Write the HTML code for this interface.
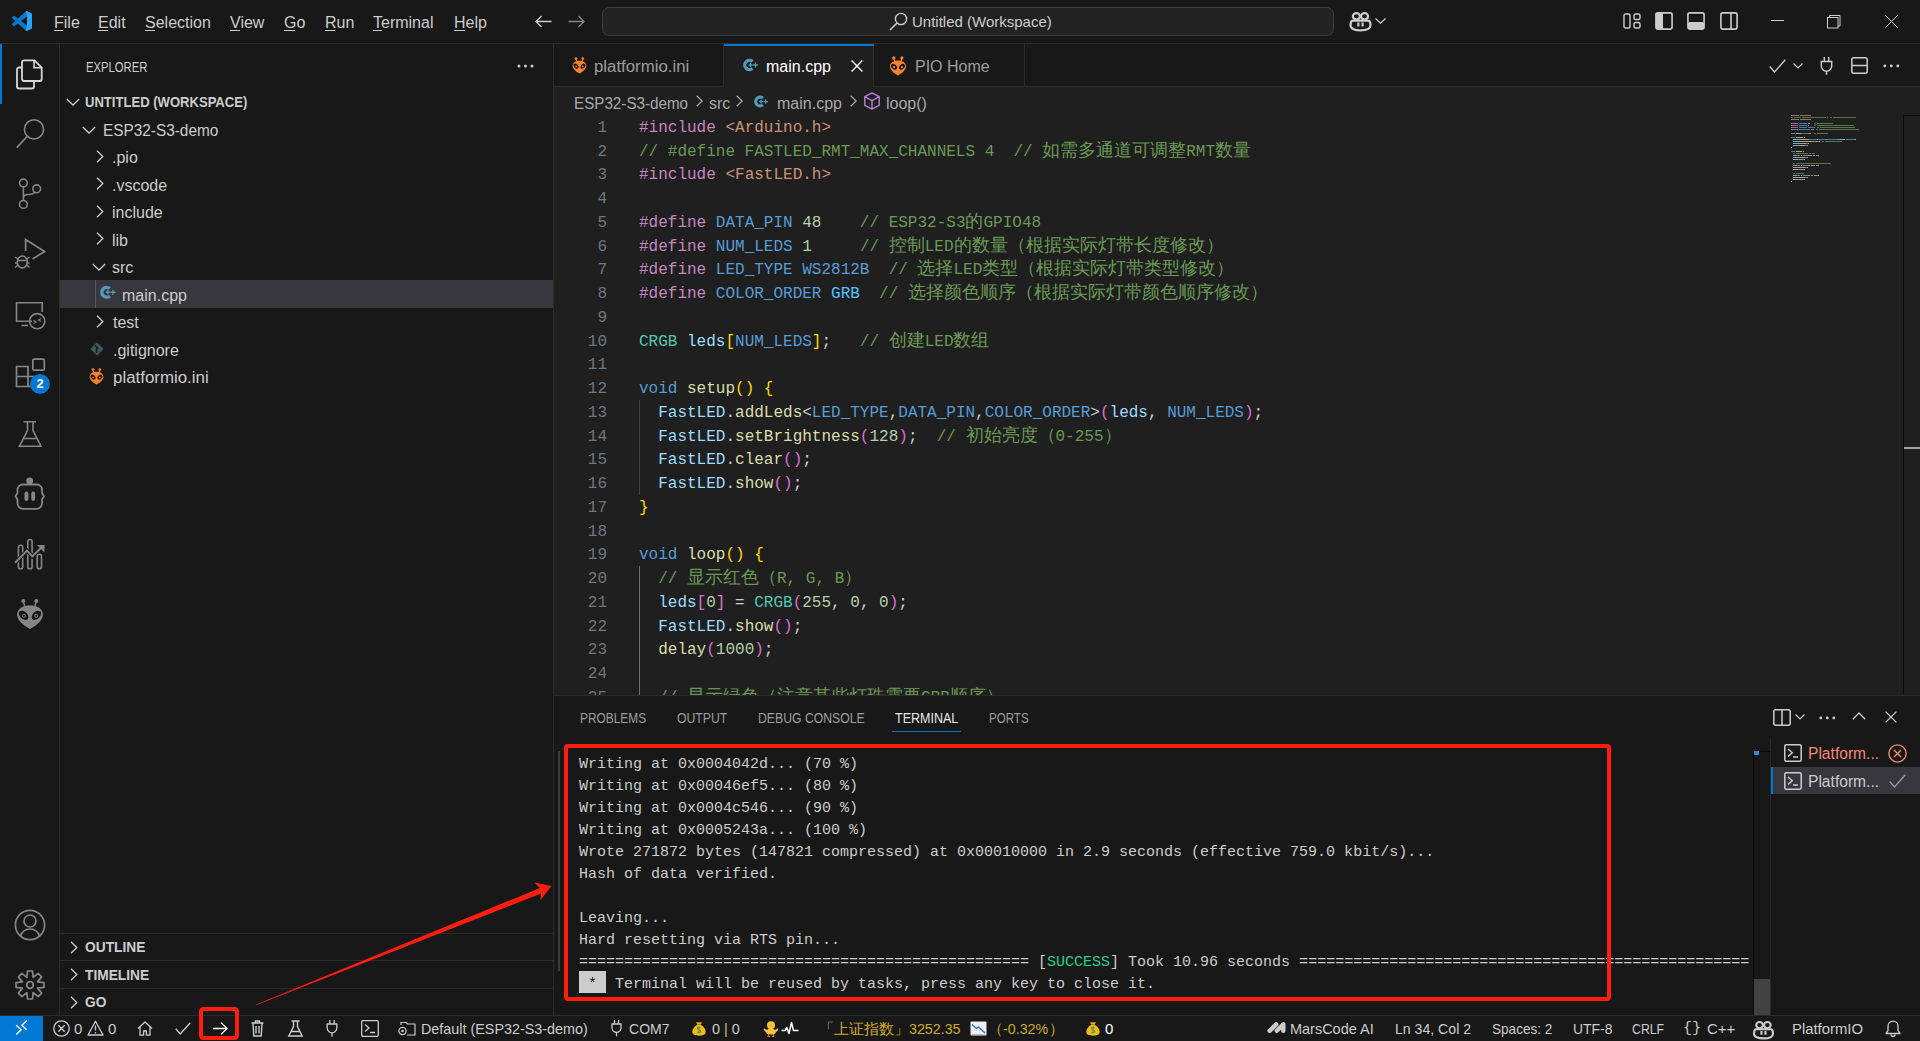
<!DOCTYPE html>
<domain hidden>Computer-Use</domain>
<html><head><meta charset="utf-8">
<style>
*{margin:0;padding:0;box-sizing:border-box}
html,body{width:1920px;height:1041px;overflow:hidden}
body{background:#181818;font-family:"Liberation Sans",sans-serif;position:relative;color:#ccc}
.a{position:absolute}
.t{position:absolute;white-space:pre}
.mono{font-family:"Liberation Mono",monospace}
svg{position:absolute;overflow:visible}
/* code colors */
.kw{color:#C586C0}.st{color:#CE9178}.cm{color:#6A9955}.mc{color:#569CD6}.nu{color:#B5CEA8}
.ty{color:#4EC9B0}.va{color:#9CDCFE}.fn{color:#DCDCAA}.b1{color:#FFD700}.b2{color:#DA70D6}.b3{color:#179FFF}.pl{color:#CCCCCC}
.ln{left:0;width:53px;text-align:right;font-size:16px;line-height:23.75px}
.cl{left:85px;font-size:16px;line-height:23.75px}
.cj{font-size:17.5px;line-height:0}
.en{color:#4FC1FF}
.tl{left:579px;font-size:15px;line-height:22px;color:#CCCCCC}
.sb{top:1016px;line-height:25px;font-size:15px}
.mm div{position:absolute;height:1.4px}
</style></head><body>

<!-- ============ TITLE BAR ============ -->
<div class="a" id="titlebar" style="left:0;top:0;width:1920px;height:43px;background:#181818">
<svg style="left:12px;top:11px" width="20" height="20" viewBox="0 0 100 100"><path fill="#0A78C8" d="M96.46 10.8L75.86.87a6.23 6.23 0 0 0-7.1 1.2L29.35 38.04 12.17 25.01a4.16 4.16 0 0 0-5.32.24L1.35 30.25a4.17 4.17 0 0 0 0 6.16L16.25 50 1.35 63.59a4.17 4.17 0 0 0 0 6.16l5.5 5a4.16 4.16 0 0 0 5.32.24l17.18-13.03 39.41 35.960a6.22 6.22 0 0 0 7.1 1.2l20.6-9.92A6.24 6.24 0 0 0 100 83.58V16.42a6.24 6.24 0 0 0-3.54-5.62zM75.02 72.7L45.11 50l29.91-22.7z"/><path fill="#2AA4F4" d="M68.76 2.07a6.23 6.23 0 0 1 7.1-1.2l20.6 9.93A6.24 6.24 0 0 1 100 16.42v67.16a6.24 6.24 0 0 1-3.54 5.62l-20.6 9.92a6.22 6.22 0 0 1-7.1-1.2L75.02 72.7V27.3z"/></svg>
<div class="t" style="left:54px;top:1px;line-height:43px;font-size:16px;color:#CCCCCC">File</div>
<div class="t" style="left:98px;top:1px;line-height:43px;font-size:16px;color:#CCCCCC">Edit</div>
<div class="t" style="left:145px;top:1px;line-height:43px;font-size:16px;color:#CCCCCC">Selection</div>
<div class="t" style="left:230px;top:1px;line-height:43px;font-size:16px;color:#CCCCCC">View</div>
<div class="t" style="left:284px;top:1px;line-height:43px;font-size:16px;color:#CCCCCC">Go</div>
<div class="t" style="left:325px;top:1px;line-height:43px;font-size:16px;color:#CCCCCC">Run</div>
<div class="t" style="left:373px;top:1px;line-height:43px;font-size:16px;color:#CCCCCC">Terminal</div>
<div class="t" style="left:454px;top:1px;line-height:43px;font-size:16px;color:#CCCCCC">Help</div>
<div class="a" style="left:54px;top:29.5px;width:9px;height:1px;background:#CCCCCC"></div>
<div class="a" style="left:98px;top:29.5px;width:10px;height:1px;background:#CCCCCC"></div>
<div class="a" style="left:145px;top:29.5px;width:10px;height:1px;background:#CCCCCC"></div>
<div class="a" style="left:230px;top:29.5px;width:10px;height:1px;background:#CCCCCC"></div>
<div class="a" style="left:284px;top:29.5px;width:11px;height:1px;background:#CCCCCC"></div>
<div class="a" style="left:325px;top:29.5px;width:10px;height:1px;background:#CCCCCC"></div>
<div class="a" style="left:373px;top:29.5px;width:9px;height:1px;background:#CCCCCC"></div>
<div class="a" style="left:454px;top:29.5px;width:11px;height:1px;background:#CCCCCC"></div>
<svg style="left:535px;top:15px" width="17" height="13" viewBox="0 0 17 13"><path d="M16.5 6.5H1M6.5 1L1 6.5L6.5 12" fill="none" stroke="#CCCCCC" stroke-width="1.3"/></svg>
<svg style="left:568px;top:15px" width="17" height="13" viewBox="0 0 17 13"><path d="M0.5 6.5H16M10.5 1L16 6.5L10.5 12" fill="none" stroke="#868686" stroke-width="1.3"/></svg>
<div class="a" style="left:602px;top:7px;width:732px;height:29px;background:#222222;border:1px solid #3E3E3E;border-radius:7px"></div>
<svg style="left:889px;top:12px" width="19" height="19" viewBox="0 0 19 19"><circle cx="12" cy="7" r="5.6" fill="none" stroke="#CCCCCC" stroke-width="1.4"/><path d="M8 11L1 18" stroke="#CCCCCC" stroke-width="1.6"/></svg>
<div class="t" style="left:912px;top:7px;line-height:29px;font-size:15px;color:#CCCCCC">Untitled (Workspace)</div>
<svg style="left:1349px;top:11px" width="23" height="20.6" viewBox="0 0 23 21.5"><ellipse cx="7.2" cy="5.6" rx="3.7" ry="3.4" fill="none" stroke="#CCCCCC" stroke-width="2.3"/><ellipse cx="15.7" cy="5.6" rx="3.7" ry="3.4" fill="none" stroke="#CCCCCC" stroke-width="2.3"/><path d="M2.8 10.2H20.2C21.5 11 21.9 13 21.9 15C21.9 18.7 17.5 20.2 11.5 20.2C5.5 20.2 1.1 18.7 1.1 15C1.1 13 1.5 11 2.8 10.2z" fill="none" stroke="#CCCCCC" stroke-width="2.3" stroke-linejoin="round"/><rect x="8.1" y="12" width="2.3" height="4.2" fill="#CCCCCC"/><rect x="12.5" y="12" width="2.3" height="4.2" fill="#CCCCCC"/></svg>
<svg style="left:1375px;top:18px" width="11" height="6" viewBox="0 0 11 6"><path d="M.5.5L5.5 5.2L10.5.5" fill="none" stroke="#CCCCCC" stroke-width="1.2"/></svg>
<svg style="left:1623px;top:13px" width="18" height="16" viewBox="0 0 18 16"><rect x="1" y="1" width="6" height="14" rx="1.6" fill="none" stroke="#CCCCCC" stroke-width="1.4"/><rect x="11" y="1" width="6" height="5.5" rx="1.6" fill="none" stroke="#CCCCCC" stroke-width="1.4"/><rect x="11" y="9.5" width="6" height="5.5" rx="1.6" fill="none" stroke="#CCCCCC" stroke-width="1.4"/></svg>
<svg style="left:1655px;top:12px" width="18" height="18" viewBox="0 0 18 18"><rect x=".9" y=".9" width="16.2" height="16.2" rx="2" fill="none" stroke="#CCCCCC" stroke-width="1.6"/><rect x="1" y="1" width="7" height="16" rx="1.5" fill="#CCCCCC"/></svg>
<svg style="left:1687px;top:12px" width="18" height="18" viewBox="0 0 18 18"><rect x=".9" y=".9" width="16.2" height="16.2" rx="2" fill="none" stroke="#CCCCCC" stroke-width="1.6"/><rect x="1" y="10" width="16" height="7" rx="1.5" fill="#CCCCCC"/></svg>
<svg style="left:1720px;top:12px" width="18" height="18" viewBox="0 0 18 18"><rect x=".9" y=".9" width="16.2" height="16.2" rx="2" fill="none" stroke="#CCCCCC" stroke-width="1.6"/><path d="M11 1v16" stroke="#CCCCCC" stroke-width="1.6"/></svg>
<div class="a" style="left:1771px;top:20px;width:13px;height:1px;background:#CCCCCC"></div>
<svg style="left:1827px;top:15px" width="14" height="14" viewBox="0 0 14 14"><rect x=".5" y="2.5" width="10.5" height="10.5" fill="none" stroke="#CCCCCC" stroke-width="1"/><path d="M2.5 2.5V.5H13V11h-2" fill="none" stroke="#CCCCCC" stroke-width="1"/></svg>
<svg style="left:1885px;top:15px" width="13" height="13" viewBox="0 0 13 13"><path d="M.3.3L12.7 12.7M12.7.3L.3 12.7" stroke="#CCCCCC" stroke-width="1"/></svg>
</div>
<div class="a" style="left:0;top:43px;width:1920px;height:1px;background:#2B2B2B"></div>

<!-- ============ ACTIVITY BAR ============ -->
<div class="a" style="left:59px;top:44px;width:1px;height:971px;background:#2B2B2B"></div>
<div class="a" style="left:0;top:44px;width:2px;height:60px;background:#0078D4"></div>
<!-- explorer -->
<svg style="left:16px;top:59px" width="28" height="31" viewBox="0 0 28 31"><path d="M8 1.3h10.5l7.2 7.2V20a2 2 0 0 1-2 2H8a2 2 0 0 1-2-2V3.3a2 2 0 0 1 2-2z" fill="none" stroke="#D7D7D7" stroke-width="1.8"/><path d="M18 1.5v7.3h7.5" fill="none" stroke="#D7D7D7" stroke-width="1.6"/><path d="M6 8.5H3a2 2 0 0 0-2 2V27.5a2 2 0 0 0 2 2h13a2 2 0 0 0 2-2v-5.5" fill="none" stroke="#D7D7D7" stroke-width="1.8"/></svg>
<!-- search -->
<svg style="left:15px;top:118px" width="32" height="32" viewBox="0 0 32 32"><circle cx="19" cy="11.4" r="9.6" fill="none" stroke="#868686" stroke-width="1.6"/><path d="M12 18.5L1.8 29.6" stroke="#868686" stroke-width="1.8"/></svg>
<!-- scm -->
<svg style="left:16px;top:176px" width="28" height="34" viewBox="0 0 28 34"><circle cx="7.4" cy="7" r="3.9" fill="none" stroke="#868686" stroke-width="1.6"/><circle cx="7.4" cy="28.4" r="3.9" fill="none" stroke="#868686" stroke-width="1.6"/><circle cx="20.7" cy="12.8" r="3.9" fill="none" stroke="#868686" stroke-width="1.6"/><path d="M7.4 10.9V24.5M7.4 22c0-2.5 1.5-3.5 5-3.5c4 0 6-1.5 7-2.5" fill="none" stroke="#868686" stroke-width="1.6"/></svg>
<!-- run debug -->
<svg style="left:14px;top:238px" width="34" height="32" viewBox="0 0 34 32"><path d="M11.6 13V1.6L30.6 13.5L18.5 21" fill="none" stroke="#868686" stroke-width="1.7"/><ellipse cx="8.3" cy="24" rx="5" ry="6" fill="none" stroke="#868686" stroke-width="1.6"/><path d="M3.3 22.5h10M1 19l3 2M15.6 19l-3 2M1 29.5l3-2.5M15.6 29.5l-3-2.5M4 25H1M12.5 25h3" stroke="#868686" stroke-width="1.4"/></svg>
<!-- remote -->
<svg style="left:15px;top:301px" width="33" height="30" viewBox="0 0 33 30"><path d="M17 20.3H1.5V1.7H27.2V11" fill="none" stroke="#868686" stroke-width="1.6"/><path d="M6.5 24.5h6.5" stroke="#868686" stroke-width="1.6"/><circle cx="22.2" cy="20.2" r="7.6" fill="none" stroke="#868686" stroke-width="1.6"/><path d="M18.5 19.5l2.5 1.5-2.5 1.5M26 17.5l-2.5 1.5 2.5 1.5" fill="none" stroke="#868686" stroke-width="1.1"/></svg>
<!-- extensions -->
<svg style="left:15px;top:358px" width="32" height="31" viewBox="0 0 32 31"><path d="M1.5 8.5h11.5v20H1.5zM1.5 18.5h21v10H13" fill="none" stroke="#868686" stroke-width="1.7"/><rect x="17.8" y="1.2" width="11.5" height="11" rx="1.5" fill="none" stroke="#868686" stroke-width="1.7"/></svg>
<div class="a" style="left:30px;top:374px;width:20px;height:20px;border-radius:10px;background:#0078D4;color:#fff;font-size:13px;font-weight:bold;text-align:center;line-height:20px">2</div>
<!-- testing -->
<svg style="left:18px;top:420px" width="25" height="28" viewBox="0 0 25 28"><path d="M5.5 1.8h12.5M9.5 1.8v8.8L1.5 26.2h21.5L15 10.6V1.8M5 18.5h14.5" fill="none" stroke="#868686" stroke-width="1.6"/></svg>
<!-- robot -->
<svg style="left:14px;top:476px" width="32" height="35" viewBox="0 0 32 35"><circle cx="15.7" cy="5" r="3.4" fill="#868686"/><path d="M9 8.5h13.5c3.5 0 5.5 2.5 5.5 5.5v3l2 3.3-2 3.3v3.5c0 3-2 5.7-5.5 5.7H9c-3.5 0-5.5-2.7-5.5-5.7v-3.5L1.5 20.3l2-3.3v-3c0-3 2-5.5 5.5-5.5z" fill="none" stroke="#868686" stroke-width="1.8"/><rect x="10.5" y="15.5" width="3.8" height="9.5" rx="1.9" fill="#868686"/><rect x="17.3" y="15.5" width="3.8" height="9.5" rx="1.9" fill="#868686"/></svg>
<!-- chart -->
<svg style="left:14px;top:538px" width="32" height="32" viewBox="0 0 32 32"><rect x="4.4" y="7.3" width="4.3" height="23.5" rx="2.1" fill="none" stroke="#868686" stroke-width="1.6"/><rect x="13.8" y="1.5" width="4.3" height="29.3" rx="2.1" fill="none" stroke="#868686" stroke-width="1.6"/><rect x="23.2" y="16.3" width="4.3" height="14.5" rx="2.1" fill="none" stroke="#868686" stroke-width="1.6"/><path d="M1 24.8L13 12.6L18.3 18.4L29 8" fill="none" stroke="#181818" stroke-width="4"/><path d="M1 24.8L13 12.6L18.3 18.4L29 8" fill="none" stroke="#868686" stroke-width="2"/><path d="M23 7h7.5v7.5z" fill="#868686"/></svg>
<!-- platformio -->
<svg style="left:16px;top:598px" width="28" height="32" viewBox="0 0 28 32"><circle cx="7.3" cy="3" r="2" fill="#868686"/><circle cx="20.3" cy="3" r="2" fill="#868686"/><path d="M7.6 4.5L8.8 8.5M20 4.5L18.8 8.5" stroke="#868686" stroke-width="1.3"/><path d="M14 7.2c7.2 0 12.9 3.6 12.9 9.6 0 4.6-6 11-12.9 14.2C7.1 27.8 1.1 21.4 1.1 16.8c0-6 5.7-9.6 12.9-9.6z" fill="#868686"/><ellipse cx="7.6" cy="17.3" rx="5.6" ry="3.6" transform="rotate(42 7.6 17.3)" fill="#181818"/><ellipse cx="20.4" cy="17.3" rx="5.6" ry="3.6" transform="rotate(-42 20.4 17.3)" fill="#181818"/><circle cx="7.8" cy="17.8" r="1.5" fill="none" stroke="#868686" stroke-width="1"/><circle cx="20.2" cy="17.8" r="1.5" fill="none" stroke="#868686" stroke-width="1"/></svg>
<!-- accounts -->
<svg style="left:14px;top:909px" width="32" height="32" viewBox="0 0 32 32"><circle cx="16" cy="16" r="14.6" fill="none" stroke="#868686" stroke-width="1.7"/><circle cx="16" cy="12" r="6" fill="none" stroke="#868686" stroke-width="1.7"/><path d="M6.5 27c1.5-4.5 5-7 9.5-7s8 2.5 9.5 7" fill="none" stroke="#868686" stroke-width="1.7"/></svg>
<!-- settings -->
<svg style="left:14px;top:969px" width="32" height="32" viewBox="0 0 32 32"><path d="M13.53 2.02L18.47 2.02L19.14 8.42L24.14 4.37L27.63 7.86L23.58 12.86L29.98 13.53L29.98 18.47L23.58 19.14L27.63 24.14L24.14 27.63L19.14 23.58L18.47 29.98L13.53 29.98L12.86 23.58L7.86 27.63L4.37 24.14L8.42 19.14L2.02 18.47L2.02 13.53L8.42 12.86L4.37 7.86L7.86 4.37L12.86 8.42z" fill="none" stroke="#868686" stroke-width="1.7" stroke-linejoin="round"/><circle cx="16" cy="16" r="3.3" fill="none" stroke="#868686" stroke-width="1.8"/></svg>

<!-- ============ SIDEBAR ============ -->
<div class="a" style="left:553px;top:44px;width:1px;height:971px;background:#2B2B2B"></div>
<div class="t" style="left:86px;top:45.5px;line-height:43.75px;font-size:13.75px;color:#CCCCCC;display:inline-block;transform:scaleX(.82);transform-origin:0 0">EXPLORER</div>
<svg style="left:517px;top:64px" width="17" height="4" viewBox="0 0 17 4"><circle cx="2" cy="2" r="1.5" fill="#CCCCCC"/><circle cx="8.5" cy="2" r="1.5" fill="#CCCCCC"/><circle cx="15" cy="2" r="1.5" fill="#CCCCCC"/></svg>
<svg style="left:66px;top:98px" width="14" height="8" viewBox="0 0 14 8"><path d="M.8 1L7 7L13.2 1" fill="none" stroke="#CCCCCC" stroke-width="1.3"/></svg>
<div class="t" style="left:85px;top:88.5px;line-height:27.5px;font-size:13.75px;font-weight:bold;color:#CCCCCC;display:inline-block;transform:scaleX(.95);transform-origin:0 0">UNTITLED (WORKSPACE)</div>
<svg style="left:82px;top:126px" width="14" height="8" viewBox="0 0 14 8"><path d="M.8 1L7 7L13.2 1" fill="none" stroke="#CCCCCC" stroke-width="1.3"/></svg>
<div class="t" style="left:103px;top:116.5px;line-height:27.5px;font-size:16px;color:#CCCCCC;transform:scaleX(.96);transform-origin:0 0">ESP32-S3-demo</div>
<svg style="left:96px;top:150px" width="8" height="13" viewBox="0 0 8 13"><path d="M1 .8L6.8 6.5L1 12.2" fill="none" stroke="#CCCCCC" stroke-width="1.3"/></svg><div class="t" style="left:112px;top:144.0px;line-height:27.5px;font-size:16px;color:#CCCCCC">.pio</div>
<svg style="left:96px;top:177px" width="8" height="13" viewBox="0 0 8 13"><path d="M1 .8L6.8 6.5L1 12.2" fill="none" stroke="#CCCCCC" stroke-width="1.3"/></svg><div class="t" style="left:112px;top:171.5px;line-height:27.5px;font-size:16px;color:#CCCCCC">.vscode</div>
<svg style="left:96px;top:205px" width="8" height="13" viewBox="0 0 8 13"><path d="M1 .8L6.8 6.5L1 12.2" fill="none" stroke="#CCCCCC" stroke-width="1.3"/></svg><div class="t" style="left:112px;top:199.0px;line-height:27.5px;font-size:16px;color:#CCCCCC">include</div>
<svg style="left:96px;top:232px" width="8" height="13" viewBox="0 0 8 13"><path d="M1 .8L6.8 6.5L1 12.2" fill="none" stroke="#CCCCCC" stroke-width="1.3"/></svg><div class="t" style="left:112px;top:226.5px;line-height:27.5px;font-size:16px;color:#CCCCCC">lib</div>
<svg style="left:92px;top:263px" width="14" height="8" viewBox="0 0 14 8"><path d="M.8 1L7 7L13.2 1" fill="none" stroke="#CCCCCC" stroke-width="1.3"/></svg><div class="t" style="left:112px;top:254.0px;line-height:27.5px;font-size:16px;color:#CCCCCC">src</div>
<div class="a" style="left:60px;top:280px;width:493px;height:28px;background:#37373D"></div>
<div class="a" style="left:95px;top:280px;width:1px;height:28px;background:#585858"></div>
<svg style="left:100px;top:285px" width="15.5" height="14.47" viewBox="0 0 15 14"><path d="M9.5 3.4A4.7 4.7 0 1 0 9.5 10.6" fill="none" stroke="#519ABA" stroke-width="3.3"/><path d="M5.6 7h4M7.6 5v4M10 7h5M12.5 4.5v5" stroke="#519ABA" stroke-width="1.3"/></svg>
<div class="t" style="left:122px;top:281.5px;line-height:27.5px;font-size:16px;color:#CCCCCC">main.cpp</div>
<svg style="left:96px;top:315px" width="8" height="13" viewBox="0 0 8 13"><path d="M1 .8L6.8 6.5L1 12.2" fill="none" stroke="#CCCCCC" stroke-width="1.3"/></svg><div class="t" style="left:113px;top:309.0px;line-height:27.5px;font-size:16px;color:#CCCCCC">test</div>
<svg style="left:90px;top:342px" width="14" height="14" viewBox="0 0 14 14"><path d="M7 .3L13.7 7L7 13.7L.3 7z" fill="#41535B"/><path d="M5 3.5l3.5 3.5M6.5 5v5" stroke="#181818" stroke-width="1.2"/><circle cx="6.5" cy="10" r="1" fill="#181818"/></svg>
<div class="t" style="left:113px;top:336.5px;line-height:27.5px;font-size:16px;color:#CCCCCC">.gitignore</div>
<svg style="left:89px;top:368px" width="15" height="17" viewBox="0 0 28 32"><circle cx="7.3" cy="3" r="2.6" fill="#F6822B"/><circle cx="20.3" cy="3" r="2.6" fill="#F6822B"/><path d="M7.6 4.5L8.8 8.5M20 4.5L18.8 8.5" stroke="#F6822B" stroke-width="2"/><path d="M14 7.2c7.2 0 12.9 3.6 12.9 9.6 0 4.6-6 11-12.9 14.2C7.1 27.8 1.1 21.4 1.1 16.8c0-6 5.7-9.6 12.9-9.6z" fill="#F6822B"/><ellipse cx="7.6" cy="17.3" rx="5.4" ry="3.8" transform="rotate(42 7.6 17.3)" fill="#181818"/><ellipse cx="20.4" cy="17.3" rx="5.4" ry="3.8" transform="rotate(-42 20.4 17.3)" fill="#181818"/><circle cx="7.8" cy="17.8" r="1.7" fill="#F6822B"/><circle cx="20.2" cy="17.8" r="1.7" fill="#F6822B"/></svg>
<div class="t" style="left:113px;top:364.0px;line-height:27.5px;font-size:16px;color:#CCCCCC;transform:scaleX(1.055);transform-origin:0 0">platformio.ini</div>
<!-- bottom sections -->
<div class="a" style="left:60px;top:933px;width:493px;height:1px;background:#2B2B2B"></div>
<div class="a" style="left:60px;top:960px;width:493px;height:1px;background:#2B2B2B"></div>
<div class="a" style="left:60px;top:988px;width:493px;height:1px;background:#2B2B2B"></div>
<svg style="left:70px;top:941px" width="8" height="13" viewBox="0 0 8 13"><path d="M1 .8L6.8 6.5L1 12.2" fill="none" stroke="#CCCCCC" stroke-width="1.3"/></svg><svg style="left:70px;top:968px" width="8" height="13" viewBox="0 0 8 13"><path d="M1 .8L6.8 6.5L1 12.2" fill="none" stroke="#CCCCCC" stroke-width="1.3"/></svg><svg style="left:70px;top:996px" width="8" height="13" viewBox="0 0 8 13"><path d="M1 .8L6.8 6.5L1 12.2" fill="none" stroke="#CCCCCC" stroke-width="1.3"/></svg>
<div class="t" style="left:85px;top:935px;line-height:26.5px;font-size:13.75px;font-weight:bold;color:#CCCCCC">OUTLINE</div>
<div class="t" style="left:85px;top:962px;line-height:27px;font-size:13.75px;font-weight:bold;color:#CCCCCC">TIMELINE</div>
<div class="t" style="left:85px;top:990px;line-height:25px;font-size:13.75px;font-weight:bold;color:#CCCCCC">GO</div>

<!-- ============ EDITOR ============ -->
<div class="a" id="editor" style="left:554px;top:87px;width:1366px;height:608px;background:#1F1F1F"></div>
<div class="a" style="left:554px;top:86px;width:1366px;height:1px;background:#2B2B2B"></div>
<!-- tabs -->
<div class="a" style="left:554px;top:44px;width:170px;height:42px;background:#181818;border-right:1px solid #2B2B2B"></div>
<svg style="left:572px;top:57px" width="15" height="17" viewBox="0 0 28 32"><circle cx="7.3" cy="3" r="2.6" fill="#F6822B"/><circle cx="20.3" cy="3" r="2.6" fill="#F6822B"/><path d="M7.6 4.5L8.8 8.5M20 4.5L18.8 8.5" stroke="#F6822B" stroke-width="2"/><path d="M14 7.2c7.2 0 12.9 3.6 12.9 9.6 0 4.6-6 11-12.9 14.2C7.1 27.8 1.1 21.4 1.1 16.8c0-6 5.7-9.6 12.9-9.6z" fill="#F6822B"/><ellipse cx="7.6" cy="17.3" rx="5.4" ry="3.8" transform="rotate(42 7.6 17.3)" fill="#181818"/><ellipse cx="20.4" cy="17.3" rx="5.4" ry="3.8" transform="rotate(-42 20.4 17.3)" fill="#181818"/><circle cx="7.8" cy="17.8" r="1.7" fill="#F6822B"/><circle cx="20.2" cy="17.8" r="1.7" fill="#F6822B"/></svg>
<div class="t" style="left:594px;top:46px;line-height:42px;font-size:16px;color:#9D9D9D;transform:scaleX(1.05);transform-origin:0 0">platformio.ini</div>
<div class="a" style="left:724px;top:44px;width:150px;height:43px;background:#1F1F1F;border-right:1px solid #2B2B2B"></div>
<div class="a" style="left:724px;top:44px;width:150px;height:1.5px;background:#0078D4"></div>
<svg style="left:743px;top:57.5px" width="15" height="14.00" viewBox="0 0 15 14"><path d="M9.5 3.4A4.7 4.7 0 1 0 9.5 10.6" fill="none" stroke="#519ABA" stroke-width="3.3"/><path d="M5.6 7h4M7.6 5v4M10 7h5M12.5 4.5v5" stroke="#519ABA" stroke-width="1.3"/></svg>
<div class="t" style="left:766px;top:46px;line-height:42px;font-size:16px;color:#FFFFFF">main.cpp</div>
<svg style="left:851px;top:60px" width="12" height="12" viewBox="0 0 12 12"><path d="M.6.6L11.4 11.4M11.4.6L.6 11.4" stroke="#FFFFFF" stroke-width="1.4"/></svg>
<div class="a" style="left:874px;top:44px;width:151px;height:42px;background:#181818;border-right:1px solid #2B2B2B"></div>
<svg style="left:888.5px;top:56px" width="18" height="20" viewBox="0 0 28 32"><circle cx="7.3" cy="3" r="2.6" fill="#F6822B"/><circle cx="20.3" cy="3" r="2.6" fill="#F6822B"/><path d="M7.6 4.5L8.8 8.5M20 4.5L18.8 8.5" stroke="#F6822B" stroke-width="2"/><path d="M14 7.2c7.2 0 12.9 3.6 12.9 9.6 0 4.6-6 11-12.9 14.2C7.1 27.8 1.1 21.4 1.1 16.8c0-6 5.7-9.6 12.9-9.6z" fill="#F6822B"/><ellipse cx="7.6" cy="17.3" rx="5.4" ry="3.8" transform="rotate(42 7.6 17.3)" fill="#181818"/><ellipse cx="20.4" cy="17.3" rx="5.4" ry="3.8" transform="rotate(-42 20.4 17.3)" fill="#181818"/><circle cx="7.8" cy="17.8" r="1.7" fill="#F6822B"/><circle cx="20.2" cy="17.8" r="1.7" fill="#F6822B"/></svg>
<div class="t" style="left:915px;top:46px;line-height:42px;font-size:16px;color:#9D9D9D">PIO Home</div>
<svg style="left:1769px;top:59px" width="17" height="14" viewBox="0 0 17 14"><path d="M.7 7.5L5.5 13L16.3.8" fill="none" stroke="#CCCCCC" stroke-width="1.4"/></svg>
<svg style="left:1793px;top:63px" width="10" height="6" viewBox="0 0 10 6"><path d="M.5.5L5 5L9.5.5" fill="none" stroke="#CCCCCC" stroke-width="1.2"/></svg>
<svg style="left:1820px;top:56px" width="13" height="19" viewBox="0 0 13 19"><path d="M4.3 1v4.5M8.7 1v4.5M1.3 5.5h10.4v4.5a5.2 5.2 0 0 1-10.4 0z" fill="none" stroke="#CCCCCC" stroke-width="1.4"/><path d="M6.5 15.3v3.5" stroke="#CCCCCC" stroke-width="1.4"/></svg>
<svg style="left:1851px;top:57px" width="17" height="17" viewBox="0 0 17 17"><rect x=".8" y=".8" width="15.4" height="15.4" rx="2" fill="none" stroke="#CCCCCC" stroke-width="1.5"/><path d="M1 8.5h15" stroke="#CCCCCC" stroke-width="1.5"/></svg>
<svg style="left:1883px;top:64px" width="17" height="4" viewBox="0 0 17 4"><circle cx="1.8" cy="2" r="1.4" fill="#CCCCCC"/><circle cx="8.3" cy="2" r="1.4" fill="#CCCCCC"/><circle cx="14.8" cy="2" r="1.4" fill="#CCCCCC"/></svg>
<!-- breadcrumbs -->
<div class="t" style="left:574px;top:89.5px;line-height:27.5px;font-size:16px;color:#A9A9A9;transform:scaleX(.95);transform-origin:0 0">ESP32-S3-demo</div>
<svg style="left:696px;top:95px" width="7" height="12" viewBox="0 0 7 12"><path d="M.7.7L6.2 6L.7 11.3" fill="none" stroke="#A9A9A9" stroke-width="1.2"/></svg>
<div class="t" style="left:709px;top:89.5px;line-height:27.5px;font-size:16px;color:#A9A9A9">src</div>
<svg style="left:736px;top:95px" width="7" height="12" viewBox="0 0 7 12"><path d="M.7.7L6.2 6L.7 11.3" fill="none" stroke="#A9A9A9" stroke-width="1.2"/></svg>
<svg style="left:754px;top:94.5px" width="14" height="13.07" viewBox="0 0 15 14"><path d="M9.5 3.4A4.7 4.7 0 1 0 9.5 10.6" fill="none" stroke="#519ABA" stroke-width="3.3"/><path d="M5.6 7h4M7.6 5v4M10 7h5M12.5 4.5v5" stroke="#519ABA" stroke-width="1.3"/></svg>
<div class="t" style="left:777px;top:89.5px;line-height:27.5px;font-size:16px;color:#A9A9A9">main.cpp</div>
<svg style="left:850px;top:95px" width="7" height="12" viewBox="0 0 7 12"><path d="M.7.7L6.2 6L.7 11.3" fill="none" stroke="#A9A9A9" stroke-width="1.2"/></svg>
<svg style="left:864px;top:92px" width="16" height="18" viewBox="0 0 16 18"><path d="M8 .8L15.2 4.7V13.3L8 17.2L.8 13.3V4.7z M.8 4.7L8 8.6L15.2 4.7M8 8.6V17.2" fill="none" stroke="#B180D7" stroke-width="1.4" stroke-linejoin="round"/></svg>
<div class="t" style="left:886px;top:89.5px;line-height:27.5px;font-size:16px;color:#A9A9A9">loop()</div>

<!-- code -->
<div class="a" style="left:554px;top:114.5px;width:1230px;height:580.5px;overflow:hidden">
<div class="a" style="left:85px;top:285px;width:1px;height:95px;background:#404040"></div>
<div class="a" style="left:85px;top:451.25px;width:1px;height:140px;background:#707070"></div>
<div class="t mono ln" style="top:2.40px;color:#6E7681">1</div>
<div class="t mono cl" style="top:2.40px"><span class="kw">#include</span><span class="pl"> </span><span class="st">&lt;Arduino.h&gt;</span></div>
<div class="t mono ln" style="top:26.15px;color:#6E7681">2</div>
<div class="t mono cl" style="top:26.15px"><span class="cm">// #define FASTLED_RMT_MAX_CHANNELS 4  // <span class="cj">如需多通道可调整</span>RMT<span class="cj">数量</span></span></div>
<div class="t mono ln" style="top:49.90px;color:#6E7681">3</div>
<div class="t mono cl" style="top:49.90px"><span class="kw">#include</span><span class="pl"> </span><span class="st">&lt;FastLED.h&gt;</span></div>
<div class="t mono ln" style="top:73.65px;color:#6E7681">4</div>
<div class="t mono ln" style="top:97.40px;color:#6E7681">5</div>
<div class="t mono cl" style="top:97.40px"><span class="kw">#define</span><span class="pl"> </span><span class="mc">DATA_PIN</span><span class="pl"> </span><span class="nu">48</span><span class="pl">    </span><span class="cm">// ESP32-S3<span class="cj">的</span>GPIO48</span></div>
<div class="t mono ln" style="top:121.15px;color:#6E7681">6</div>
<div class="t mono cl" style="top:121.15px"><span class="kw">#define</span><span class="pl"> </span><span class="mc">NUM_LEDS</span><span class="pl"> </span><span class="nu">1</span><span class="pl">     </span><span class="cm">// <span class="cj">控制</span>LED<span class="cj">的数量（根据实际灯带长度修改）</span></span></div>
<div class="t mono ln" style="top:144.90px;color:#6E7681">7</div>
<div class="t mono cl" style="top:144.90px"><span class="kw">#define</span><span class="pl"> </span><span class="mc">LED_TYPE</span><span class="pl"> </span><span class="mc">WS2812B</span><span class="pl">  </span><span class="cm">// <span class="cj">选择</span>LED<span class="cj">类型（根据实际灯带类型修改）</span></span></div>
<div class="t mono ln" style="top:168.65px;color:#6E7681">8</div>
<div class="t mono cl" style="top:168.65px"><span class="kw">#define</span><span class="pl"> </span><span class="mc">COLOR_ORDER</span><span class="pl"> </span><span class="en">GRB</span><span class="pl">  </span><span class="cm">// <span class="cj">选择颜色顺序（根据实际灯带颜色顺序修改）</span></span></div>
<div class="t mono ln" style="top:192.40px;color:#6E7681">9</div>
<div class="t mono ln" style="top:216.15px;color:#6E7681">10</div>
<div class="t mono cl" style="top:216.15px"><span class="ty">CRGB</span><span class="pl"> </span><span class="va">leds</span><span class="b1">[</span><span class="mc">NUM_LEDS</span><span class="b1">]</span><span class="pl">;   </span><span class="cm">// <span class="cj">创建</span>LED<span class="cj">数组</span></span></div>
<div class="t mono ln" style="top:239.90px;color:#6E7681">11</div>
<div class="t mono ln" style="top:263.65px;color:#6E7681">12</div>
<div class="t mono cl" style="top:263.65px"><span class="mc">void</span><span class="pl"> </span><span class="fn">setup</span><span class="b1">()</span><span class="pl"> </span><span class="b1">{</span></div>
<div class="t mono ln" style="top:287.40px;color:#6E7681">13</div>
<div class="t mono cl" style="top:287.40px"><span class="pl">  </span><span class="va">FastLED</span><span class="pl">.</span><span class="fn">addLeds</span><span class="pl">&lt;</span><span class="mc">LED_TYPE</span><span class="pl">,</span><span class="mc">DATA_PIN</span><span class="pl">,</span><span class="mc">COLOR_ORDER</span><span class="pl">&gt;</span><span class="b2">(</span><span class="va">leds</span><span class="pl">, </span><span class="mc">NUM_LEDS</span><span class="b2">)</span><span class="pl">;</span></div>
<div class="t mono ln" style="top:311.15px;color:#6E7681">14</div>
<div class="t mono cl" style="top:311.15px"><span class="pl">  </span><span class="va">FastLED</span><span class="pl">.</span><span class="fn">setBrightness</span><span class="b2">(</span><span class="nu">128</span><span class="b2">)</span><span class="pl">;  </span><span class="cm">// <span class="cj">初始亮度（</span>0-255<span class="cj">）</span></span></div>
<div class="t mono ln" style="top:334.90px;color:#6E7681">15</div>
<div class="t mono cl" style="top:334.90px"><span class="pl">  </span><span class="va">FastLED</span><span class="pl">.</span><span class="fn">clear</span><span class="b2">()</span><span class="pl">;</span></div>
<div class="t mono ln" style="top:358.65px;color:#6E7681">16</div>
<div class="t mono cl" style="top:358.65px"><span class="pl">  </span><span class="va">FastLED</span><span class="pl">.</span><span class="fn">show</span><span class="b2">()</span><span class="pl">;</span></div>
<div class="t mono ln" style="top:382.40px;color:#6E7681">17</div>
<div class="t mono cl" style="top:382.40px"><span class="b1">}</span></div>
<div class="t mono ln" style="top:406.15px;color:#6E7681">18</div>
<div class="t mono ln" style="top:429.90px;color:#6E7681">19</div>
<div class="t mono cl" style="top:429.90px"><span class="mc">void</span><span class="pl"> </span><span class="fn">loop</span><span class="b1">()</span><span class="pl"> </span><span class="b1">{</span></div>
<div class="t mono ln" style="top:453.65px;color:#6E7681">20</div>
<div class="t mono cl" style="top:453.65px"><span class="pl">  </span><span class="cm">// <span class="cj">显示红色（</span>R, G, B<span class="cj">）</span></span></div>
<div class="t mono ln" style="top:477.40px;color:#6E7681">21</div>
<div class="t mono cl" style="top:477.40px"><span class="pl">  </span><span class="va">leds</span><span class="b2">[</span><span class="nu">0</span><span class="b2">]</span><span class="pl"> = </span><span class="ty">CRGB</span><span class="b2">(</span><span class="nu">255</span><span class="pl">, </span><span class="nu">0</span><span class="pl">, </span><span class="nu">0</span><span class="b2">)</span><span class="pl">;</span></div>
<div class="t mono ln" style="top:501.15px;color:#6E7681">22</div>
<div class="t mono cl" style="top:501.15px"><span class="pl">  </span><span class="va">FastLED</span><span class="pl">.</span><span class="fn">show</span><span class="b2">()</span><span class="pl">;</span></div>
<div class="t mono ln" style="top:524.90px;color:#6E7681">23</div>
<div class="t mono cl" style="top:524.90px"><span class="pl">  </span><span class="fn">delay</span><span class="b2">(</span><span class="nu">1000</span><span class="b2">)</span><span class="pl">;</span></div>
<div class="t mono ln" style="top:548.65px;color:#6E7681">24</div>
<div class="t mono ln" style="top:572.40px;color:#6E7681">25</div>
<div class="t mono cl" style="top:572.40px"><span class="pl">  </span><span class="cm">// <span class="cj">显示绿色（注意某些灯珠需要</span>GRB<span class="cj">顺序）</span></span></div>
</div>
<!-- minimap -->
<div class="a mm" style="left:1791px;top:115px;width:100px;height:70px;opacity:.72">
<div style="left:0.0px;top:0px;width:8.0px;background:#C586C0"></div>
<div style="left:9.0px;top:0px;width:11.0px;background:#CE9178"></div>
<div style="left:0.0px;top:2px;width:2.0px;background:#6A9955"></div>
<div style="left:3.0px;top:2px;width:7.0px;background:#6A9955"></div>
<div style="left:11.0px;top:2px;width:24.0px;background:#6A9955"></div>
<div style="left:36.0px;top:2px;width:1.0px;background:#6A9955"></div>
<div style="left:39.0px;top:2px;width:2.0px;background:#6A9955"></div>
<div style="left:42.0px;top:2px;width:23.0px;background:#6A9955"></div>
<div style="left:0.0px;top:4px;width:8.0px;background:#C586C0"></div>
<div style="left:9.0px;top:4px;width:11.0px;background:#CE9178"></div>
<div style="left:0.0px;top:8px;width:7.0px;background:#C586C0"></div>
<div style="left:8.0px;top:8px;width:8.0px;background:#569CD6"></div>
<div style="left:17.0px;top:8px;width:2.0px;background:#B5CEA8"></div>
<div style="left:23.0px;top:8px;width:2.0px;background:#6A9955"></div>
<div style="left:26.0px;top:8px;width:16.0px;background:#6A9955"></div>
<div style="left:0.0px;top:10px;width:7.0px;background:#C586C0"></div>
<div style="left:8.0px;top:10px;width:8.0px;background:#569CD6"></div>
<div style="left:17.0px;top:10px;width:1.0px;background:#B5CEA8"></div>
<div style="left:23.0px;top:10px;width:2.0px;background:#6A9955"></div>
<div style="left:26.0px;top:10px;width:37.0px;background:#6A9955"></div>
<div style="left:0.0px;top:12px;width:7.0px;background:#C586C0"></div>
<div style="left:8.0px;top:12px;width:8.0px;background:#569CD6"></div>
<div style="left:17.0px;top:12px;width:7.0px;background:#569CD6"></div>
<div style="left:26.0px;top:12px;width:2.0px;background:#6A9955"></div>
<div style="left:29.0px;top:12px;width:35.0px;background:#6A9955"></div>
<div style="left:0.0px;top:14px;width:7.0px;background:#C586C0"></div>
<div style="left:8.0px;top:14px;width:11.0px;background:#569CD6"></div>
<div style="left:20.0px;top:14px;width:3.0px;background:#4FC1FF"></div>
<div style="left:25.0px;top:14px;width:2.0px;background:#6A9955"></div>
<div style="left:28.0px;top:14px;width:40.0px;background:#6A9955"></div>
<div style="left:0.0px;top:18px;width:4.0px;background:#4EC9B0"></div>
<div style="left:5.0px;top:18px;width:4.0px;background:#9CDCFE"></div>
<div style="left:9.0px;top:18px;width:1.0px;background:#FFD700"></div>
<div style="left:10.0px;top:18px;width:8.0px;background:#569CD6"></div>
<div style="left:18.0px;top:18px;width:1.0px;background:#FFD700"></div>
<div style="left:19.0px;top:18px;width:1.0px;background:#CCCCCC"></div>
<div style="left:23.0px;top:18px;width:2.0px;background:#6A9955"></div>
<div style="left:26.0px;top:18px;width:11.0px;background:#6A9955"></div>
<div style="left:0.0px;top:22px;width:4.0px;background:#569CD6"></div>
<div style="left:5.0px;top:22px;width:5.0px;background:#DCDCAA"></div>
<div style="left:10.0px;top:22px;width:2.0px;background:#FFD700"></div>
<div style="left:13.0px;top:22px;width:1.0px;background:#FFD700"></div>
<div style="left:2.0px;top:24px;width:7.0px;background:#9CDCFE"></div>
<div style="left:9.0px;top:24px;width:1.0px;background:#CCCCCC"></div>
<div style="left:10.0px;top:24px;width:7.0px;background:#DCDCAA"></div>
<div style="left:17.0px;top:24px;width:1.0px;background:#CCCCCC"></div>
<div style="left:18.0px;top:24px;width:8.0px;background:#569CD6"></div>
<div style="left:26.0px;top:24px;width:1.0px;background:#CCCCCC"></div>
<div style="left:27.0px;top:24px;width:8.0px;background:#569CD6"></div>
<div style="left:35.0px;top:24px;width:1.0px;background:#CCCCCC"></div>
<div style="left:36.0px;top:24px;width:11.0px;background:#569CD6"></div>
<div style="left:47.0px;top:24px;width:1.0px;background:#CCCCCC"></div>
<div style="left:48.0px;top:24px;width:1.0px;background:#DA70D6"></div>
<div style="left:49.0px;top:24px;width:4.0px;background:#9CDCFE"></div>
<div style="left:53.0px;top:24px;width:1.0px;background:#CCCCCC"></div>
<div style="left:55.0px;top:24px;width:8.0px;background:#569CD6"></div>
<div style="left:63.0px;top:24px;width:1.0px;background:#DA70D6"></div>
<div style="left:64.0px;top:24px;width:1.0px;background:#CCCCCC"></div>
<div style="left:2.0px;top:26px;width:7.0px;background:#9CDCFE"></div>
<div style="left:9.0px;top:26px;width:1.0px;background:#CCCCCC"></div>
<div style="left:10.0px;top:26px;width:13.0px;background:#DCDCAA"></div>
<div style="left:23.0px;top:26px;width:1.0px;background:#DA70D6"></div>
<div style="left:24.0px;top:26px;width:3.0px;background:#B5CEA8"></div>
<div style="left:27.0px;top:26px;width:1.0px;background:#DA70D6"></div>
<div style="left:28.0px;top:26px;width:1.0px;background:#CCCCCC"></div>
<div style="left:31.0px;top:26px;width:2.0px;background:#6A9955"></div>
<div style="left:34.0px;top:26px;width:17.0px;background:#6A9955"></div>
<div style="left:2.0px;top:28px;width:7.0px;background:#9CDCFE"></div>
<div style="left:9.0px;top:28px;width:1.0px;background:#CCCCCC"></div>
<div style="left:10.0px;top:28px;width:5.0px;background:#DCDCAA"></div>
<div style="left:15.0px;top:28px;width:2.0px;background:#DA70D6"></div>
<div style="left:17.0px;top:28px;width:1.0px;background:#CCCCCC"></div>
<div style="left:2.0px;top:30px;width:7.0px;background:#9CDCFE"></div>
<div style="left:9.0px;top:30px;width:1.0px;background:#CCCCCC"></div>
<div style="left:10.0px;top:30px;width:4.0px;background:#DCDCAA"></div>
<div style="left:14.0px;top:30px;width:2.0px;background:#DA70D6"></div>
<div style="left:16.0px;top:30px;width:1.0px;background:#CCCCCC"></div>
<div style="left:0.0px;top:32px;width:1.0px;background:#FFD700"></div>
<div style="left:0.0px;top:36px;width:4.0px;background:#569CD6"></div>
<div style="left:5.0px;top:36px;width:4.0px;background:#DCDCAA"></div>
<div style="left:9.0px;top:36px;width:2.0px;background:#FFD700"></div>
<div style="left:12.0px;top:36px;width:1.0px;background:#FFD700"></div>
<div style="left:2.0px;top:38px;width:2.0px;background:#6A9955"></div>
<div style="left:5.0px;top:38px;width:12.0px;background:#6A9955"></div>
<div style="left:18.0px;top:38px;width:2.0px;background:#6A9955"></div>
<div style="left:21.0px;top:38px;width:3.0px;background:#6A9955"></div>
<div style="left:2.0px;top:40px;width:4.0px;background:#9CDCFE"></div>
<div style="left:6.0px;top:40px;width:1.0px;background:#DA70D6"></div>
<div style="left:7.0px;top:40px;width:1.0px;background:#B5CEA8"></div>
<div style="left:8.0px;top:40px;width:1.0px;background:#DA70D6"></div>
<div style="left:10.0px;top:40px;width:1.0px;background:#CCCCCC"></div>
<div style="left:12.0px;top:40px;width:4.0px;background:#4EC9B0"></div>
<div style="left:16.0px;top:40px;width:1.0px;background:#DA70D6"></div>
<div style="left:17.0px;top:40px;width:3.0px;background:#B5CEA8"></div>
<div style="left:20.0px;top:40px;width:1.0px;background:#CCCCCC"></div>
<div style="left:22.0px;top:40px;width:1.0px;background:#B5CEA8"></div>
<div style="left:23.0px;top:40px;width:1.0px;background:#CCCCCC"></div>
<div style="left:25.0px;top:40px;width:1.0px;background:#B5CEA8"></div>
<div style="left:26.0px;top:40px;width:1.0px;background:#DA70D6"></div>
<div style="left:27.0px;top:40px;width:1.0px;background:#CCCCCC"></div>
<div style="left:2.0px;top:42px;width:7.0px;background:#9CDCFE"></div>
<div style="left:9.0px;top:42px;width:1.0px;background:#CCCCCC"></div>
<div style="left:10.0px;top:42px;width:4.0px;background:#DCDCAA"></div>
<div style="left:14.0px;top:42px;width:2.0px;background:#DA70D6"></div>
<div style="left:16.0px;top:42px;width:1.0px;background:#CCCCCC"></div>
<div style="left:2.0px;top:44px;width:5.0px;background:#DCDCAA"></div>
<div style="left:7.0px;top:44px;width:1.0px;background:#DA70D6"></div>
<div style="left:8.0px;top:44px;width:4.0px;background:#B5CEA8"></div>
<div style="left:12.0px;top:44px;width:1.0px;background:#DA70D6"></div>
<div style="left:13.0px;top:44px;width:1.0px;background:#CCCCCC"></div>
<div style="left:2.0px;top:48px;width:2.0px;background:#6A9955"></div>
<div style="left:5.0px;top:48px;width:35.0px;background:#6A9955"></div>
<div style="left:2.0px;top:50px;width:4.0px;background:#9CDCFE"></div>
<div style="left:6.0px;top:50px;width:1.0px;background:#DA70D6"></div>
<div style="left:7.0px;top:50px;width:1.0px;background:#B5CEA8"></div>
<div style="left:8.0px;top:50px;width:1.0px;background:#DA70D6"></div>
<div style="left:10.0px;top:50px;width:1.0px;background:#CCCCCC"></div>
<div style="left:12.0px;top:50px;width:4.0px;background:#4EC9B0"></div>
<div style="left:16.0px;top:50px;width:1.0px;background:#DA70D6"></div>
<div style="left:17.0px;top:50px;width:1.0px;background:#B5CEA8"></div>
<div style="left:18.0px;top:50px;width:1.0px;background:#CCCCCC"></div>
<div style="left:20.0px;top:50px;width:3.0px;background:#B5CEA8"></div>
<div style="left:23.0px;top:50px;width:1.0px;background:#CCCCCC"></div>
<div style="left:25.0px;top:50px;width:1.0px;background:#B5CEA8"></div>
<div style="left:26.0px;top:50px;width:1.0px;background:#DA70D6"></div>
<div style="left:27.0px;top:50px;width:1.0px;background:#CCCCCC"></div>
<div style="left:2.0px;top:52px;width:7.0px;background:#9CDCFE"></div>
<div style="left:9.0px;top:52px;width:1.0px;background:#CCCCCC"></div>
<div style="left:10.0px;top:52px;width:4.0px;background:#DCDCAA"></div>
<div style="left:14.0px;top:52px;width:2.0px;background:#DA70D6"></div>
<div style="left:16.0px;top:52px;width:1.0px;background:#CCCCCC"></div>
<div style="left:2.0px;top:54px;width:5.0px;background:#DCDCAA"></div>
<div style="left:7.0px;top:54px;width:1.0px;background:#DA70D6"></div>
<div style="left:8.0px;top:54px;width:4.0px;background:#B5CEA8"></div>
<div style="left:12.0px;top:54px;width:1.0px;background:#DA70D6"></div>
<div style="left:13.0px;top:54px;width:1.0px;background:#CCCCCC"></div>
<div style="left:2.0px;top:58px;width:2.0px;background:#6A9955"></div>
<div style="left:5.0px;top:58px;width:8.0px;background:#6A9955"></div>
<div style="left:2.0px;top:60px;width:4.0px;background:#9CDCFE"></div>
<div style="left:6.0px;top:60px;width:1.0px;background:#DA70D6"></div>
<div style="left:7.0px;top:60px;width:1.0px;background:#B5CEA8"></div>
<div style="left:8.0px;top:60px;width:1.0px;background:#DA70D6"></div>
<div style="left:10.0px;top:60px;width:1.0px;background:#CCCCCC"></div>
<div style="left:12.0px;top:60px;width:4.0px;background:#4EC9B0"></div>
<div style="left:16.0px;top:60px;width:1.0px;background:#DA70D6"></div>
<div style="left:17.0px;top:60px;width:1.0px;background:#B5CEA8"></div>
<div style="left:18.0px;top:60px;width:1.0px;background:#CCCCCC"></div>
<div style="left:20.0px;top:60px;width:1.0px;background:#B5CEA8"></div>
<div style="left:21.0px;top:60px;width:1.0px;background:#CCCCCC"></div>
<div style="left:23.0px;top:60px;width:3.0px;background:#B5CEA8"></div>
<div style="left:26.0px;top:60px;width:1.0px;background:#DA70D6"></div>
<div style="left:27.0px;top:60px;width:1.0px;background:#CCCCCC"></div>
<div style="left:2.0px;top:62px;width:7.0px;background:#9CDCFE"></div>
<div style="left:9.0px;top:62px;width:1.0px;background:#CCCCCC"></div>
<div style="left:10.0px;top:62px;width:4.0px;background:#DCDCAA"></div>
<div style="left:14.0px;top:62px;width:2.0px;background:#DA70D6"></div>
<div style="left:16.0px;top:62px;width:1.0px;background:#CCCCCC"></div>
<div style="left:2.0px;top:64px;width:5.0px;background:#DCDCAA"></div>
<div style="left:7.0px;top:64px;width:1.0px;background:#DA70D6"></div>
<div style="left:8.0px;top:64px;width:4.0px;background:#B5CEA8"></div>
<div style="left:12.0px;top:64px;width:1.0px;background:#DA70D6"></div>
<div style="left:13.0px;top:64px;width:1.0px;background:#CCCCCC"></div>
<div style="left:0.0px;top:66px;width:1.0px;background:#FFD700"></div>
</div>
<div class="a" style="left:1903px;top:115px;width:1px;height:580px;background:#0B0B0B"></div>
<div class="a" style="left:1903px;top:115px;width:17px;height:1px;background:#0B0B0B"></div>
<div class="a" style="left:1904px;top:447px;width:16px;height:2px;background:#A0A0A0"></div>
<!-- ============ PANEL ============ -->
<div class="t" style="left:579.5px;top:705px;line-height:27.5px;font-size:13.75px;color:#9D9D9D;transform:scaleX(0.865);transform-origin:0 0">PROBLEMS</div>
<div class="t" style="left:676.5px;top:705px;line-height:27.5px;font-size:13.75px;color:#9D9D9D;transform:scaleX(0.89);transform-origin:0 0">OUTPUT</div>
<div class="t" style="left:757.5px;top:705px;line-height:27.5px;font-size:13.75px;color:#9D9D9D;transform:scaleX(0.89);transform-origin:0 0">DEBUG CONSOLE</div>
<div class="t" style="left:895px;top:705px;line-height:27.5px;font-size:13.75px;color:#E7E7E7;transform:scaleX(0.91);transform-origin:0 0">TERMINAL</div>
<div class="t" style="left:988.7px;top:705px;line-height:27.5px;font-size:13.75px;color:#9D9D9D;transform:scaleX(0.84);transform-origin:0 0">PORTS</div>
<div class="a" style="left:892px;top:730.5px;width:69px;height:1px;background:#0078D4"></div>
<svg style="left:1773px;top:709px" width="18" height="17" viewBox="0 0 18 17"><rect x=".8" y=".8" width="16.4" height="15.4" rx="2" fill="none" stroke="#CCCCCC" stroke-width="1.5"/><path d="M9 1v15" stroke="#CCCCCC" stroke-width="1.5"/></svg>
<svg style="left:1795px;top:714px" width="10" height="6" viewBox="0 0 10 6"><path d="M.5.5L5 5L9.5.5" fill="none" stroke="#CCCCCC" stroke-width="1.2"/></svg>
<svg style="left:1819px;top:716px" width="17" height="4" viewBox="0 0 17 4"><circle cx="1.8" cy="2" r="1.4" fill="#CCCCCC"/><circle cx="8.3" cy="2" r="1.4" fill="#CCCCCC"/><circle cx="14.8" cy="2" r="1.4" fill="#CCCCCC"/></svg>
<svg style="left:1852px;top:712px" width="14" height="8" viewBox="0 0 14 8"><path d="M.8 7.2L7 1L13.2 7.2" fill="none" stroke="#CCCCCC" stroke-width="1.3"/></svg>
<svg style="left:1885px;top:711px" width="12" height="12" viewBox="0 0 12 12"><path d="M.6.6L11.4 11.4M11.4.6L.6 11.4" stroke="#CCCCCC" stroke-width="1.3"/></svg>
<!-- terminal -->
<div class="a" style="left:558px;top:751px;width:2px;height:220px;background:#3A3A3F"></div>
<div class="t mono tl" style="top:754px">Writing at 0x0004042d... (70 %)</div>
<div class="t mono tl" style="top:776px">Writing at 0x00046ef5... (80 %)</div>
<div class="t mono tl" style="top:798px">Writing at 0x0004c546... (90 %)</div>
<div class="t mono tl" style="top:820px">Writing at 0x0005243a... (100 %)</div>
<div class="t mono tl" style="top:842px">Wrote 271872 bytes (147821 compressed) at 0x00010000 in 2.9 seconds (effective 759.0 kbit/s)...</div>
<div class="t mono tl" style="top:864px">Hash of data verified.</div>
<div class="t mono tl" style="top:908px">Leaving...</div>
<div class="t mono tl" style="top:930px">Hard resetting via RTS pin...</div>
<div class="t mono tl" style="top:952px">================================================== [<span style="color:#23D18B">SUCCESS</span>] Took 10.96 seconds ==================================================</div>
<div class="a" style="left:579px;top:971px;width:27px;height:22px;background:#CCCCCC"></div>
<div class="t mono tl" style="top:974px"><span style="color:#181818"> * </span> Terminal will be reused by tasks, press any key to close it.</div>

<!-- terminal scrollbar -->
<div class="a" style="left:1753px;top:751px;width:1px;height:264px;background:#0A0A0A"></div>
<div class="a" style="left:1753px;top:751px;width:17px;height:1px;background:#0A0A0A"></div>
<div class="a" style="left:1754px;top:751px;width:5px;height:4px;background:#2B8FD8"></div>
<div class="a" style="left:1754px;top:979px;width:16px;height:36px;background:#424242"></div>
<!-- terminal tabs -->
<div class="a" style="left:1770px;top:739px;width:1px;height:276px;background:#2B2B2B"></div>
<svg style="left:1784px;top:744px" width="18" height="18" viewBox="0 0 18 18"><rect x=".8" y=".8" width="16.4" height="16.4" rx="1.5" fill="none" stroke="#CCCCCC" stroke-width="1.5"/><path d="M4 5l4.3 3.7L4 12.4M9 13h5" fill="none" stroke="#CCCCCC" stroke-width="1.4"/></svg>
<div class="t" style="left:1808px;top:740px;line-height:27px;font-size:16px;color:#F48771;transform:scaleX(.975);transform-origin:0 0">Platform...</div>
<svg style="left:1888px;top:744px" width="19" height="19" viewBox="0 0 19 19"><circle cx="9.5" cy="9.5" r="8.6" fill="none" stroke="#F48771" stroke-width="1.4"/><path d="M6 6l7 7M13 6l-7 7" stroke="#F48771" stroke-width="1.4"/></svg>
<div class="a" style="left:1771px;top:767px;width:149px;height:27px;background:#37373D"></div>
<div class="a" style="left:1771px;top:767px;width:1.5px;height:27px;background:#0078D4"></div>
<svg style="left:1784px;top:772px" width="18" height="18" viewBox="0 0 18 18"><rect x=".8" y=".8" width="16.4" height="16.4" rx="1.5" fill="none" stroke="#CCCCCC" stroke-width="1.5"/><path d="M4 5l4.3 3.7L4 12.4M9 13h5" fill="none" stroke="#CCCCCC" stroke-width="1.4"/></svg>
<div class="t" style="left:1808px;top:768px;line-height:27px;font-size:16px;color:#CCCCCC;transform:scaleX(.975);transform-origin:0 0">Platform...</div>
<svg style="left:1889px;top:774px" width="17" height="14" viewBox="0 0 17 14"><path d="M.7 7.5L5.5 13L16.3.8" fill="none" stroke="#9D9D9D" stroke-width="1.3"/></svg>
<!-- annotations -->
<div class="a" style="left:564px;top:744px;width:1047px;height:257px;border:4.3px solid #FF1E0E;border-radius:4px"></div>
<div class="a" style="left:199px;top:1007px;width:40px;height:33px;border:4.2px solid #FF1E0E;border-radius:4.5px;z-index:5"></div>
<svg style="left:0;top:0;z-index:5" width="1920" height="1041" viewBox="0 0 1920 1041"><path d="M255.5 1004.8L540 888L534 882.5L551.5 886L540.5 900L541 893.5L256 1005.3z" fill="#FF1E0E"/></svg>

<div class="a" style="left:554px;top:695px;width:1366px;height:1px;background:#2B2B2B"></div>

<!-- ============ STATUS BAR ============ -->
<div class="a" style="left:0;top:1015px;width:1920px;height:1px;background:#2B2B2B"></div>
<div class="a" style="left:0;top:1016px;width:43px;height:25px;background:#0078D4"></div>
<svg style="left:0;top:1014px" width="44" height="27" viewBox="0 1014 44 27"><path d="M16.2 1025.2L21.1 1029.8L16.3 1034.5M26.7 1020.4L21.9 1025.2L26.7 1029.8" fill="none" stroke="#FFFFFF" stroke-width="1.4"/></svg>
<svg style="left:53px;top:1020px" width="17" height="17" viewBox="0 0 17 17"><circle cx="8.5" cy="8.5" r="7.7" fill="none" stroke="#CCCCCC" stroke-width="1.3"/><path d="M5.3 5.3l6.4 6.4M11.7 5.3l-6.4 6.4" stroke="#CCCCCC" stroke-width="1.3"/></svg>
<div class="t sb" style="left:74px;color:#CCCCCC">0</div>
<svg style="left:87px;top:1020px" width="17" height="16" viewBox="0 0 17 16"><path d="M8.5 1.2L16 15H1z" fill="none" stroke="#CCCCCC" stroke-width="1.3" stroke-linejoin="round"/><path d="M8.5 5.5v5M8.5 12v1.5" stroke="#CCCCCC" stroke-width="1.3"/></svg>
<div class="t sb" style="left:108px;color:#CCCCCC">0</div>
<svg style="left:137px;top:1021px" width="16" height="15" viewBox="0 0 16 15"><path d="M1 7.5L8 1l7 6.5M3 6v8.2h3.6V10h2.8v4.2H13V6" fill="none" stroke="#CCCCCC" stroke-width="1.3" stroke-linejoin="round"/></svg>
<svg style="left:175px;top:1022px" width="16" height="13" viewBox="0 0 16 13"><path d="M.7 6.8L5.2 12L15.3.8" fill="none" stroke="#CCCCCC" stroke-width="1.3"/></svg>
<svg style="left:213px;top:1022px" width="15" height="13" viewBox="0 0 15 13"><path d="M0 6.5H14M8 .6L14 6.5L8 12.4" fill="none" stroke="#FFFFFF" stroke-width="1.3"/></svg>
<svg style="left:251px;top:1020px" width="13" height="17" viewBox="0 0 13 17"><path d="M4.5 2.5V1h4v1.5M.5 3h12M2 3.5l.8 12.5h7.4L11 3.5M5 6v7.5M8 6v7.5" fill="none" stroke="#CCCCCC" stroke-width="1.4"/></svg>
<svg style="left:288px;top:1020px" width="15" height="17" viewBox="0 0 15 17"><path d="M3.5 1h8M5.5 1v5.5L.8 16h13.4L9.5 6.5V1M3 11.5h9" fill="none" stroke="#CCCCCC" stroke-width="1.4"/></svg>
<svg style="left:326px;top:1019px" width="12" height="19" viewBox="0 0 12 19"><path d="M3.8 1v4M8.2 1v4M1.2 5h9.6v4a4.8 4.8 0 0 1-9.6 0z" fill="none" stroke="#CCCCCC" stroke-width="1.3"/><path d="M6 13.8v4" stroke="#CCCCCC" stroke-width="1.3"/></svg>
<svg style="left:361px;top:1020px" width="18" height="17" viewBox="0 0 18 17"><rect x=".7" y=".7" width="16.6" height="15.6" rx="1.2" fill="none" stroke="#CCCCCC" stroke-width="1.3"/><path d="M4 4.5l4 3.5-4 3.5M9 12.5h5" fill="none" stroke="#CCCCCC" stroke-width="1.3"/></svg>
<svg style="left:398px;top:1021px" width="18" height="15" viewBox="0 0 18 15"><path d="M3 4V1.5h5l1.5 1.5H17v11H9M13 14h4" fill="none" stroke="#CCCCCC" stroke-width="1.2"/><circle cx="4.5" cy="10" r="3.6" fill="none" stroke="#CCCCCC" stroke-width="1.2"/><circle cx="4.5" cy="10" r="1.3" fill="#CCCCCC"/></svg>
<div class="t sb" style="left:420.5px;color:#CCCCCC;transform:scaleX(0.957);transform-origin:0 0">Default (ESP32-S3-demo)</div>
<svg style="left:611px;top:1019px" width="11" height="18" viewBox="0 0 11 18"><path d="M3.5 1v4M7.5 1v4M1 5h9v3.8a4.5 4.5 0 0 1-9 0z" fill="none" stroke="#CCCCCC" stroke-width="1.3"/><path d="M5.5 13.3v4" stroke="#CCCCCC" stroke-width="1.3"/></svg>
<div class="t sb" style="left:629px;color:#CCCCCC;transform:scaleX(0.935);transform-origin:0 0">COM7</div>
<svg style="left:692px;top:1021px" width="14" height="15" viewBox="0 0 14 15"><path d="M4 1.2h6L8.6 3.8h-3.2z" fill="#E8A317"/><path d="M5.3 3.8h3.4c3.5 1.8 5 4.8 5 7.3 0 2.5-2.5 3.6-6.7 3.6S.3 13.6.3 11.1c0-2.5 1.5-5.5 5-7.3z" fill="#F5B917"/><path d="M8.5 6.8c-.4-.4-1-.6-1.5-.6-1 0-1.6.5-1.6 1.2 0 1.6 3.3 1 3.3 2.8 0 .8-.7 1.3-1.7 1.3-.6 0-1.3-.3-1.7-.7M7 5.3v7" fill="none" stroke="#3BA34A" stroke-width="1.1"/></svg>
<div class="t sb" style="left:712px;color:#CCCCCC;transform:scaleX(.96);transform-origin:0 0">0 <span style="color:#D7BA7D">|</span> 0</div>
<svg style="left:763px;top:1020px" width="16" height="17" viewBox="0 0 16 17"><circle cx="8" cy="5.2" r="4" fill="#F6C33B"/><path d="M0.5 8.5c2 .2 3 1 3.5 1.5C5 9 6.5 8.8 8 8.8s3 .2 4 1.2c.5-.5 1.5-1.3 3.5-1.5-.5 2-1.5 3-2.5 3.4 0 1.6-2 2.6-5 2.6s-5-1-5-2.6C2 11.5 1 10.5.5 8.5z" fill="#F6C33B"/><path d="M6.5 5.5l1.5 1 1.5-1z" fill="#E8733A"/><path d="M5.5 14l-.3 2.5h2M10.5 14l.3 2.5h-2" stroke="#E8733A" stroke-width="1.1" fill="none"/></svg>
<svg style="left:781px;top:1021px" width="18" height="14" viewBox="0 0 18 14"><path d="M.5 9.5h3.5L5.8 6.5L8 12.5L10.5 1.5L12.5 9.5h5" fill="none" stroke="#FFFFFF" stroke-width="1.5" stroke-linejoin="round"/></svg>
<div class="t sb" style="left:819px;color:#CDAA2C">「上证指数」</div><div class="t sb" style="left:909px;color:#CDAA2C;transform:scaleX(.95);transform-origin:0 0">3252.35</div>
<svg style="left:970px;top:1021px" width="17" height="15" viewBox="0 0 17 15"><rect x=".5" y=".5" width="16" height="14" rx="1" fill="#EEEEEE"/><path d="M2 3.5l4.5 4 2-1.5L15 12" fill="none" stroke="#1E6FD0" stroke-width="1.3"/><path d="M2 13.5h13" stroke="#999" stroke-width=".6"/></svg>
<div class="t sb" style="left:988px;color:#CDAA2C">（<span style="display:inline-block;transform:scaleX(.95);transform-origin:0 0;margin-right:-2px">-0.32%</span>）</div>
<svg style="left:1086px;top:1021px" width="14" height="15" viewBox="0 0 14 15"><path d="M4 1.2h6L8.6 3.8h-3.2z" fill="#E8A317"/><path d="M5.3 3.8h3.4c3.5 1.8 5 4.8 5 7.3 0 2.5-2.5 3.6-6.7 3.6S.3 13.6.3 11.1c0-2.5 1.5-5.5 5-7.3z" fill="#F5B917"/><path d="M8.5 6.8c-.4-.4-1-.6-1.5-.6-1 0-1.6.5-1.6 1.2 0 1.6 3.3 1 3.3 2.8 0 .8-.7 1.3-1.7 1.3-.6 0-1.3-.3-1.7-.7M7 5.3v7" fill="none" stroke="#3BA34A" stroke-width="1.1"/></svg>
<div class="t sb" style="left:1105px;color:#FFFFFF">0</div>
<svg style="left:1262px;top:1018px" width="30" height="20" viewBox="1262 1018 30 20"><path d="M1269.6 1030.8L1276.2 1024.4M1276.8 1030.8L1283.3 1024.4V1030.8" fill="none" stroke="#CCCCCC" stroke-width="4.4" stroke-linecap="round" stroke-linejoin="round"/></svg>
<div class="t sb" style="left:1290px;color:#CCCCCC;transform:scaleX(0.965);transform-origin:0 0">MarsCode AI</div>
<div class="t sb" style="left:1394.5px;color:#CCCCCC;transform:scaleX(0.94);transform-origin:0 0">Ln 34, Col 2</div>
<div class="t sb" style="left:1491.5px;color:#CCCCCC;transform:scaleX(0.905);transform-origin:0 0">Spaces: 2</div>
<div class="t sb" style="left:1572.5px;color:#CCCCCC;transform:scaleX(0.93);transform-origin:0 0">UTF-8</div>
<div class="t sb" style="left:1632px;color:#CCCCCC;transform:scaleX(0.82);transform-origin:0 0">CRLF</div>
<div class="t sb" style="left:1683px;color:#CCCCCC;font-family:'Liberation Mono';font-size:15px">{}</div>
<div class="t sb" style="left:1707px;color:#CCCCCC">C++</div>
<svg style="left:1752.5px;top:1020px" width="21" height="19.6" viewBox="0 0 23 21.5"><ellipse cx="7.2" cy="5.6" rx="3.7" ry="3.4" fill="none" stroke="#CCCCCC" stroke-width="2.3"/><ellipse cx="15.7" cy="5.6" rx="3.7" ry="3.4" fill="none" stroke="#CCCCCC" stroke-width="2.3"/><path d="M2.8 10.2H20.2C21.5 11 21.9 13 21.9 15C21.9 18.7 17.5 20.2 11.5 20.2C5.5 20.2 1.1 18.7 1.1 15C1.1 13 1.5 11 2.8 10.2z" fill="none" stroke="#CCCCCC" stroke-width="2.3" stroke-linejoin="round"/><rect x="8.1" y="12" width="2.3" height="4.2" fill="#CCCCCC"/><rect x="12.5" y="12" width="2.3" height="4.2" fill="#CCCCCC"/></svg>
<div class="t sb" style="left:1792px;color:#CCCCCC;transform:scaleX(0.99);transform-origin:0 0">PlatformIO</div>
<svg style="left:1885px;top:1020px" width="16" height="17" viewBox="0 0 16 17"><path d="M8 1.2c-3 0-5 2.3-5 5.2v4.3L1 13.5h14L13 10.7V6.4c0-2.9-2-5.2-5-5.2zM6 14.5a2 2 0 0 0 4 0" fill="none" stroke="#CCCCCC" stroke-width="1.3" stroke-linejoin="round"/></svg>
</body></html>
